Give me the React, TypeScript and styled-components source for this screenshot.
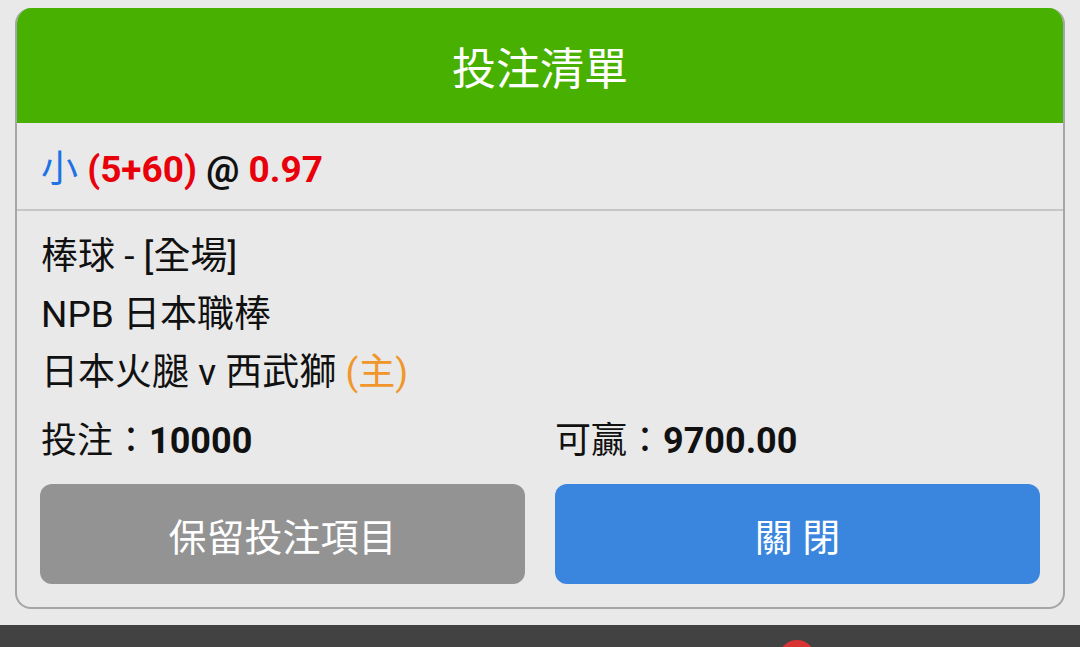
import styled, { createGlobalStyle } from "styled-components"

const GlobalStyle = createGlobalStyle`
body {
    margin: 0;
    background: #e9e9e9;
    font-family: Roboto, "Noto Sans CJK TC", sans-serif;
    color: #111;
}
`

const App: React.FC = () => {
    return (
        <Page>
            <GlobalStyle />
            <Card>
                <Header>投注清單</Header>
                <OddsRow>
                    <span>
                        <Pick>小</Pick> <Red>(5+60)</Red> @ <Red>0.97</Red>
                    </span>
                </OddsRow>
                <Details>
                    <Line>棒球 - [全場]</Line>
                    <Line>NPB 日本職棒</Line>
                    <Line>
                        日本火腿 v 西武獅 <Home>(主)</Home>
                    </Line>
                </Details>
                <Amounts>
                    <Amount>投注：<b>10000</b></Amount>
                    <Amount>可贏：<b>9700.00</b></Amount>
                </Amounts>
                <Buttons>
                    <Button bg="#939393">保留投注項目</Button>
                    <Button bg="#3a86df">關 閉</Button>
                </Buttons>
            </Card>
            <Footer>
                <Dot />
            </Footer>
        </Page>
    )
}

export default App

const Page = styled.div`
width: 1080px;
height: 647px;
overflow: hidden;
display: flex;
flex-direction: column;
padding-top: 8px;
box-sizing: border-box;
`

const Card = styled.div`
margin: 0 15px;
border: 2px solid #a6a6a6;
border-top: none;
border-radius: 16px;
overflow: hidden;
background: #e9e9e9;
`

const Header = styled.div`
height: 115px;
background: #47b000;
color: #fff;
font-size: 44px;
display: flex;
align-items: center;
justify-content: center;
margin: 0 -2px;
`

const OddsRow = styled.div`
height: 86px;
display: flex;
align-items: center;
padding: 0 24px;
font-size: 37px;
font-weight: bold;
white-space: pre;
border-bottom: 2px solid #c6c6c6;
`

const Pick = styled.span`
color: #1f72e6;
font-weight: normal;
`

const Red = styled.span`
color: #e8000b;
`

const Home = styled.span`
color: #f0962a;
`

const Details = styled.div`
padding: 17px 24px 0;
`

const Line = styled.div`
font-size: 37px;
line-height: 58px;
white-space: pre;
`

const Amount = styled.div`
font-size: 36px;
line-height: 58px;
white-space: pre;

b {
    font-weight: bold;
}
`

const Amounts = styled.div`
display: grid;
grid-template-columns: 1fr 1fr;
column-gap: 30px;
padding: 10px 24px 0;
`

const Buttons = styled.div`
display: grid;
grid-template-columns: 1fr 1fr;
column-gap: 30px;
padding: 14px 23px 23px;
`

const Button = styled.div<{ bg: string }>`
height: 100px;
border-radius: 12px;
background: ${({ bg }) => bg};
color: #fff;
font-size: 38px;
display: flex;
align-items: center;
justify-content: center;
white-space: pre;
`

const Footer = styled.div`
margin-top: 16px;
flex: 1;
background: #424242;
position: relative;
`

const Dot = styled.div`
position: absolute;
left: 779px;
top: 15px;
width: 36px;
height: 36px;
border-radius: 50%;
background: #d83232;
`
